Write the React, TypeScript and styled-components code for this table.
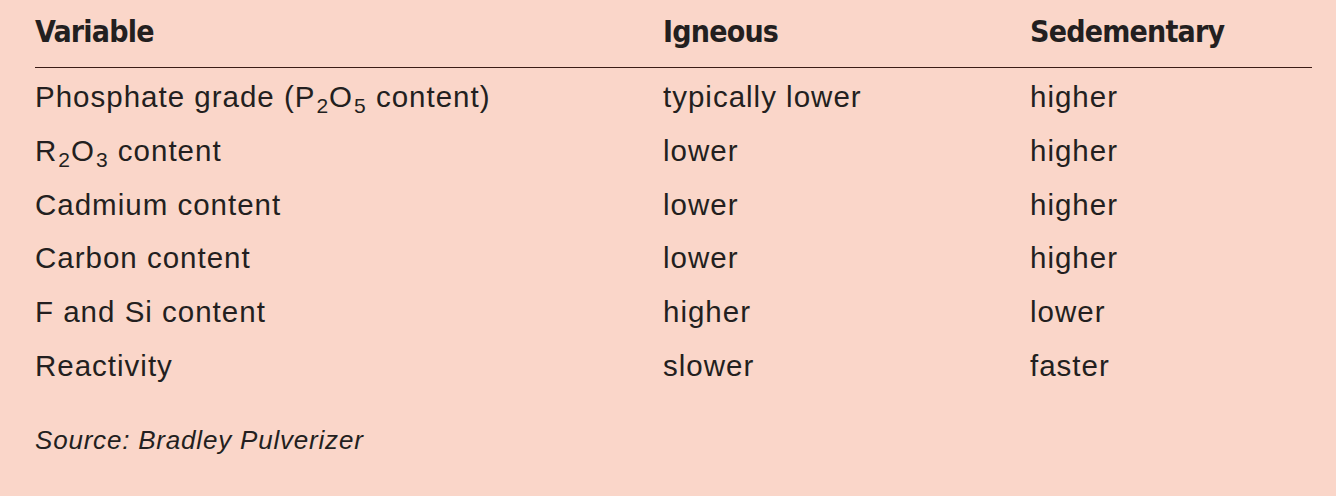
import React from "react";
import styled, { createGlobalStyle } from "styled-components";

const Global = createGlobalStyle`
  html, body { margin: 0; padding: 0; background: #fad6c9; }
  body { font-family: "Liberation Sans", Arial, sans-serif; color: #231f20; }
`;

const Page = styled.div`
  width: 1336px;
  height: 496px;
  box-sizing: border-box;
  padding: 0 24px 0 35px;
  background: #fad6c9;
`;

const Table = styled.div`
  display: grid;
  grid-template-columns: 628px 367px 282px;
  width: 1277px;
`;

const HeadCell = styled.div`
  padding: 14px 0 17px;
  margin-bottom: 2px;
  line-height: 36px;
  font-family: "Liberation Sans Narrow", "DejaVu Sans Condensed", "Liberation Sans", sans-serif;
  font-weight: 700;
  font-size: 30px;
  letter-spacing: -0.8px;
  color: #231f20;
  border-bottom: 1.5px solid #3a1c16;
`;

const Cell = styled.div`
  height: 53.8px;
  line-height: 53.8px;
  font-size: 29.5px;
  letter-spacing: 1px;
  color: #231f20;
  white-space: nowrap;
`;

const Sub = styled.sub`
  font-size: 21px;
  letter-spacing: 1px;
  margin-left: 1px;
  vertical-align: -6px;
  line-height: 0;
`;

const Source = styled.div`
  margin-top: 20px;
  line-height: 54px;
  font-size: 26px;
  letter-spacing: 0.8px;
  font-style: italic;
  color: #231f20;
`;

type Row = { v: React.ReactNode; i: string; s: string };

const rows: Row[] = [
  { v: <>Phosphate grade (P<Sub>2</Sub>O<Sub>5</Sub> content)</>, i: "typically lower", s: "higher" },
  { v: <>R<Sub>2</Sub>O<Sub>3</Sub> content</>, i: "lower", s: "higher" },
  { v: "Cadmium content", i: "lower", s: "higher" },
  { v: "Carbon content", i: "lower", s: "higher" },
  { v: "F and Si content", i: "higher", s: "lower" },
  { v: "Reactivity", i: "slower", s: "faster" },
];

export default function App() {
  return (
    <Page>
      <Global />
      <Table>
        <HeadCell>Variable</HeadCell>
        <HeadCell>Igneous</HeadCell>
        <HeadCell>Sedementary</HeadCell>
        {rows.map((r, k) => (
          <React.Fragment key={k}>
            <Cell>{r.v}</Cell>
            <Cell>{r.i}</Cell>
            <Cell>{r.s}</Cell>
          </React.Fragment>
        ))}
      </Table>
      <Source>Source: Bradley Pulverizer</Source>
    </Page>
  );
}
